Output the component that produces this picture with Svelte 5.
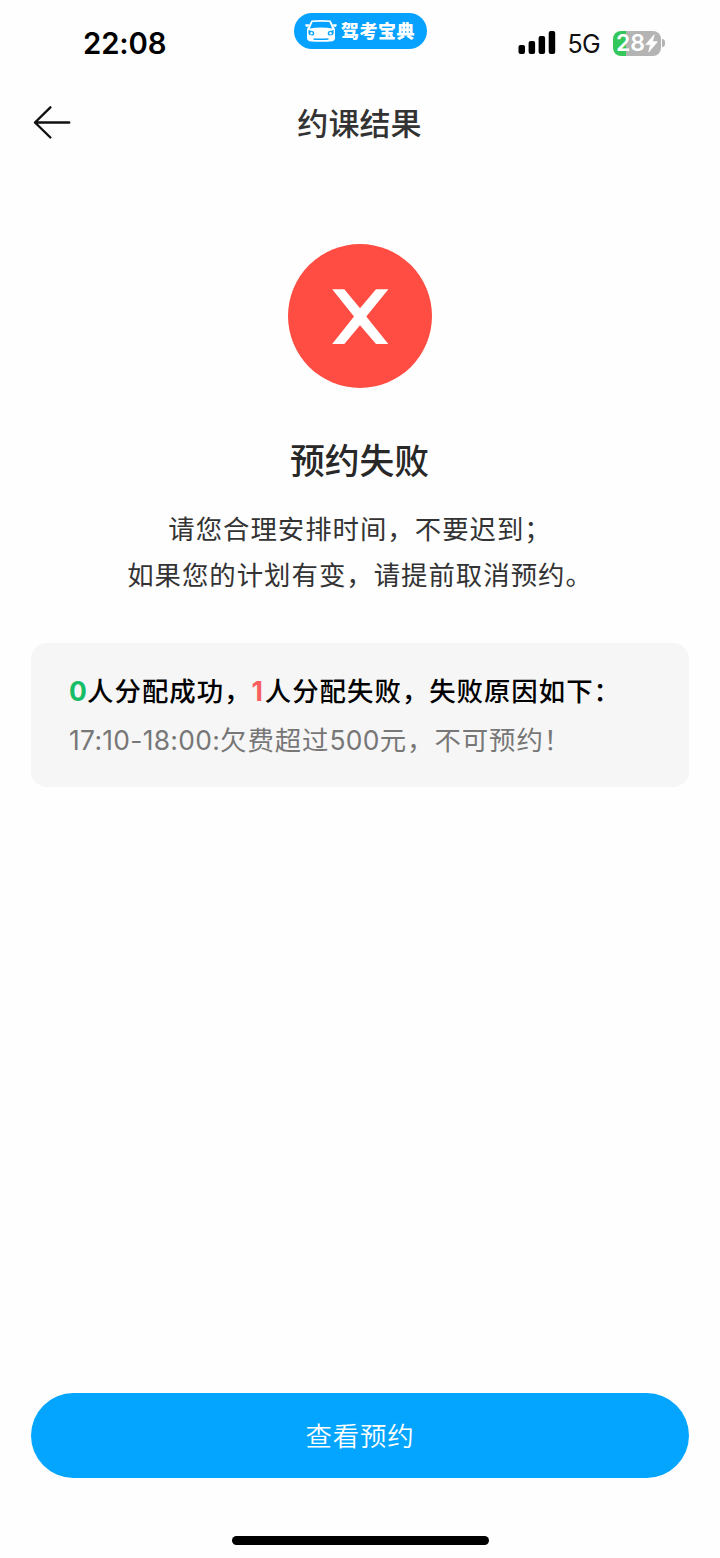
<script>
  const time = '22:08';
  const battery = 28;
  const notes = ['请您合理安排时间，不要迟到；', '如果您的计划有变，请提前取消预约。'];
  const result = { success: 0, failed: 1, slot: '17:10-18:00', limit: 500 };
</script>

<main class="screen">
  <header class="status">
    <div class="time">{time}</div>
    <div class="island">
      <svg class="car" width="32" height="22" viewBox="0 0 32 22" aria-hidden="true">
        <path fill="#fff" d="M6.4 .5Q16-.4 25.6 .5L28.6 6.5Q30 8 30 10V18.2Q29.9 20.8 27.7 21.2Q16 22.4 4.3 21.2Q2.1 20.8 2 18.2V10Q2 8 3.4 6.5Z" />
        <path fill="#fff" d="M.3 4.2H4.4L3.2 6.8H1.2Q.2 6.5.3 4.2ZM31.7 4.2H27.6L28.8 6.8H30.8Q31.8 6.5 31.7 4.2Z" />
        <path fill="#07a2ff" d="M7.6 2.1Q16 1.3 24.4 2.1L27.2 8.6Q16 6.4 4.8 8.6Z" />
        <path fill="#07a2ff" d="M3.4 10L8.8 11.4Q10.2 14.8 7.8 15.5Q3.9 15.6 3.4 13.3ZM28.6 10L23.2 11.4Q21.8 14.8 24.2 15.5Q28.1 15.6 28.6 13.3Z" />
        <circle cx="6.5" cy="13.2" r="1.2" fill="#fff" /><circle cx="25.5" cy="13.2" r="1.2" fill="#fff" />
        <path fill="none" stroke="#07a2ff" stroke-width="1.4" d="M8.5 19Q16 19.5 23.5 19" />
      </svg>
      <span class="brand">驾考宝典</span>
    </div>
    <div class="signals">
      <svg width="38" height="24" viewBox="0 0 38 24" aria-hidden="true">
        <rect x="0.5" y="14" width="6.5" height="9" rx="2" />
        <rect x="10.6" y="10" width="6.5" height="13" rx="2" />
        <rect x="20.6" y="5" width="6.5" height="18" rx="2" />
        <rect x="30.7" y="0" width="6.5" height="23" rx="2" />
      </svg>
      <span class="network">5G</span>
      <div class="battery">
        <div class="cell" style="--level: {battery}%">
          <span class="percent">{battery}</span>
          <svg class="bolt" width="13" height="19" viewBox="0 0 13 19" aria-hidden="true"><path fill="#fff" stroke="#fff" stroke-width=".8" stroke-linejoin="round" d="M9.2.8L.8 10.6H5.6L3.7 18L12.3 7.8H7.4Z" /></svg>
        </div>
        <span class="tip"></span>
      </div>
    </div>
  </header>

  <nav class="nav">
    <button class="back" aria-label="返回">
      <svg width="40" height="36" viewBox="0 0 40 36" fill="none" stroke="#111" stroke-width="2.4" stroke-linecap="round" stroke-linejoin="round" aria-hidden="true">
        <path d="M18.4 2.3L3 17.5L18.4 32.5M3 17.5H37.2" />
      </svg>
    </button>
    <h1>约课结果</h1>
  </nav>

  <section class="outcome">
    <svg width="144" height="144" viewBox="0 0 144 144" aria-hidden="true">
      <circle cx="72" cy="72" r="72" fill="#ff4d44" />
      <path fill="#fff" d="M44.2 45.3H56.3L72 64.2L88 45.3H100.4L78.3 72.5L100.3 100H88L72 81.2L56.3 100H44.2L66 72.5Z" />
    </svg>
    <h2>预约失败</h2>
    <div class="notes">
      {#each notes as note}<p>{note}</p>{/each}
    </div>
  </section>

  <section class="card">
    <p class="summary"><span class="ok">{result.success}</span>人分配成功，<span class="bad">{result.failed}</span>人分配失败，失败原因如下：</p>
    <p class="reason"><span class="latin">{result.slot}:</span>欠费超过<span class="latin">{result.limit}</span>元，不可预约！</p>
  </section>

  <footer>
    <button class="primary">查看预约</button>
    <div class="home"></div>
  </footer>
</main>

<style>
  :global(body) { margin: 0; background: #fefefe; }
  .screen {
    width: 720px; height: 1558px; display: flex; flex-direction: column; overflow: hidden;
    background: #fefefe; color: #333; font-family: "Noto Sans CJK SC", Inter, sans-serif;
  }
  h1, h2, p { margin: 0; white-space: nowrap; }
  button { border: 0; padding: 0; background: none; font-family: inherit; }
  svg { display: block; flex: none; }

  .status { height: 88px; box-sizing: border-box; display: grid; grid-template-columns: 294px 133px 1fr; align-items: start; }
  .time { padding: 26px 0 0 83px; font: 600 29.3px/36px Inter, sans-serif; color: #000; letter-spacing: -.1px; }
  .island { margin-top: 13px; height: 36px; border-radius: 18px; background: #07a2ff; display: flex; align-items: center; padding-left: 11px; gap: 4px; }
  .brand { font-size: 18px; line-height: 26px; font-weight: 900; color: #fff; letter-spacing: .5px; padding-bottom: 2px; white-space: nowrap; }
  .signals { display: flex; align-items: center; height: 36px; margin: 25px 0 0 91px; }
  .network { margin-left: 11.5px; width: 45.5px; font: 400 25px/36px Inter, sans-serif; color: #111; letter-spacing: -.6px; padding-top: 2px; }
  .battery { display: flex; align-items: center; gap: 1px; }
  .cell {
    width: 48px; height: 25px; border-radius: 8px; display: flex; align-items: center;
    background: linear-gradient(to right, #34c759 var(--level), #b4b4b4 var(--level));
  }
  .percent { margin-left: 3px; font: 600 23px/30px Inter, sans-serif; color: #fff; letter-spacing: -.1px; }
  .tip { width: 3px; height: 8px; border-radius: 0 3px 3px 0; background: #b4b4b4; }

  .nav { height: 70px; display: grid; grid-template-columns: 100px 1fr 100px; align-items: center; }
  .back { margin-left: 32px; width: 40px; height: 36px; }
  h1 { text-align: center; font-size: 31px; line-height: 40px; font-weight: 500; letter-spacing: .1px; padding: 0 1px 2px 0; }

  .outcome { padding-top: 86px; display: flex; flex-direction: column; align-items: center; }
  h2 { margin-top: 46px; padding-right: 1px; font-size: 34.8px; line-height: 50px; font-weight: 500; color: #282828; }
  .notes { margin-top: 21px; text-align: center; }
  .notes p { font-size: 26.4px; line-height: 46px; letter-spacing: 1px; }

  .card { margin: 46px 31px 0; height: 144px; box-sizing: border-box; border-radius: 16px; background: #f6f6f6; padding: 22px 38px 0; }
  .summary { font-size: 26.4px; line-height: 50px; font-weight: 500; letter-spacing: 1px; color: #000; }
  .ok, .bad { font-family: Inter, sans-serif; font-weight: 700; letter-spacing: .3px; line-height: 1; }
  .ok { color: #16bd67; }
  .bad { color: #f95f5f; letter-spacing: 2px; }
  .reason { font-size: 26.4px; line-height: 48px; letter-spacing: .95px; color: #777; }
  .latin { font-family: Inter, sans-serif; letter-spacing: .3px; line-height: 1; }

  footer { margin-top: auto; height: 165px; display: flex; flex-direction: column; align-items: center; }
  .primary { width: 658px; height: 85px; border-radius: 43px; background: #03a5ff; color: #fff; font-size: 26.4px; letter-spacing: .9px; padding-bottom: 3px; font-weight: 350; }
  .home { margin-top: 58px; width: 257px; height: 9px; border-radius: 5px; background: #000; }
</style>
